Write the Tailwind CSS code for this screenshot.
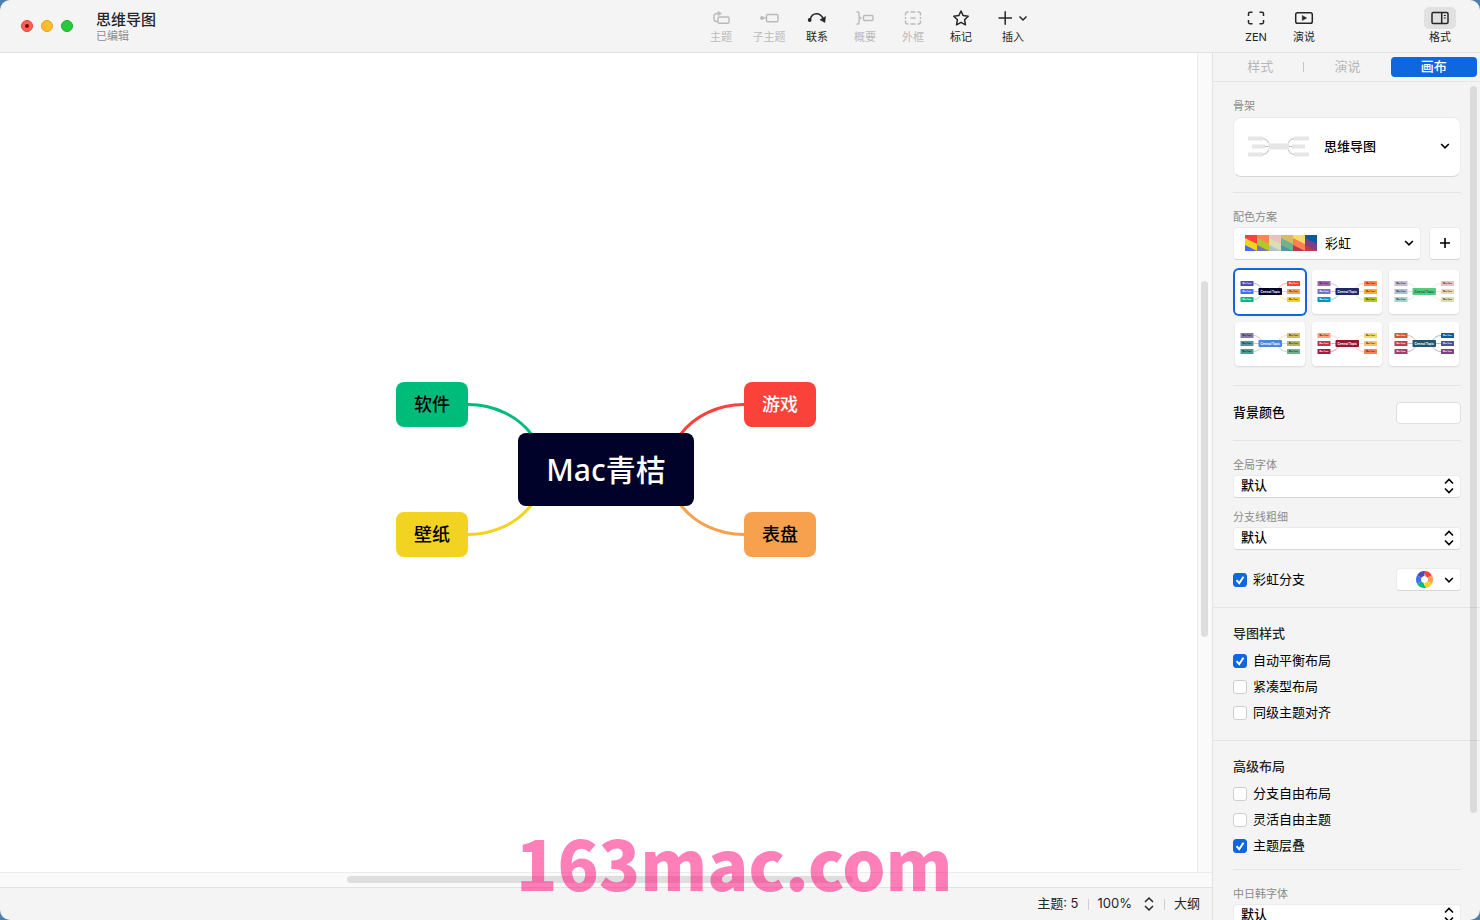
<!DOCTYPE html>
<html lang="zh-CN">
<head>
<meta charset="utf-8">
<title>思维导图</title>
<script src="https://cdn.jsdelivr.net/npm/@tailwindcss/browser@4"></script>
</head>
<body class="bg-[#4d7fae]">
<div class="relative flex h-screen flex-col overflow-hidden rounded-[10px] bg-[#f4f4f4] font-['Inter','Noto_Sans_CJK_SC',sans-serif] text-[13px] text-black">

  <header class="flex h-[53px] shrink-0 border-b border-[#e2e2e2]">
    <div class="flex w-[47.1%] shrink-0 items-center pl-[21px]">
      <div class="flex gap-2">
        <button aria-label="关闭" class="flex size-3 items-center justify-center rounded-full border border-[#e2463f] bg-[#ff5f57]"><span class="size-1 rounded-full bg-[#7a0500]"></span></button>
        <button aria-label="最小化" class="size-3 rounded-full border border-[#e1a325] bg-[#febc2e]"></button>
        <button aria-label="缩放" class="size-3 rounded-full border border-[#1dad2b] bg-[#28c840]"></button>
      </div>
      <div class="ml-[23px] pt-[2px]">
        <h1 class="text-[15px] leading-[18px] font-medium text-[#262626]">思维导图</h1>
        <p class="text-[11px] leading-[14px] text-[#8c8c8c]">已编辑</p>
      </div>
    </div>

    <nav class="flex pt-2 text-[11px] leading-4 text-[#262626]">
      <button disabled class="flex w-12 flex-col items-center gap-[1px] text-[#bababa]">
        <svg class="h-5 w-6" viewBox="0 0 24 20" fill="none" stroke="currentColor" stroke-width="1.400"><rect x="9" y="9" width="11" height="6.300" rx="1.300"/><path d="M9 13.500H7.500A2.500 2.500 0 0 1 5 11V8a2.500 2.500 0 0 1 2.500-2.500h2"/><path d="M9 3.200l3.500 2.300L9 7.800z" fill="currentColor" stroke-width=".5"/></svg>主题</button>
      <button disabled class="flex w-12 flex-col items-center gap-[1px] text-[#bababa]">
        <svg class="h-5 w-6" viewBox="0 0 24 20" fill="none" stroke="currentColor" stroke-width="1.400"><rect x="9.500" y="6.500" width="11.500" height="7.200" rx="1.200"/><path d="M5 10h4.500"/><circle cx="5" cy="10" r="1.900" fill="currentColor" stroke="none"/></svg>子主题</button>
      <button class="flex w-12 flex-col items-center gap-[1px]">
        <svg class="h-5 w-6" viewBox="0 0 24 20" fill="none" stroke="currentColor" stroke-width="1.500"><path d="M5 11.500C7.500 4 15 4 18.500 11"/><circle cx="4.700" cy="12" r="1.900" fill="currentColor" stroke="none"/><path d="M20.500 8.500l-.6 6-5-2.700z" fill="currentColor" stroke-width=".5" stroke-linejoin="round"/></svg>联系</button>
      <button disabled class="flex w-12 flex-col items-center gap-[1px] text-[#bababa]">
        <svg class="h-5 w-6" viewBox="0 0 24 20" fill="none" stroke="currentColor" stroke-width="1.400"><path d="M3.500 4H5q1 0 1 1v3.500Q6 10 8.500 10 6 10 6 11.500V15q0 1-1 1H3.500"/><rect x="10.500" y="7.500" width="9.500" height="5" rx="1"/></svg>概要</button>
      <button disabled class="flex w-12 flex-col items-center gap-[1px] text-[#bababa]">
        <svg class="h-5 w-6" viewBox="0 0 24 20" fill="none" stroke="currentColor" stroke-width="1.400"><path d="M7.500 4H6.500a2 2 0 0 0-2 2v1.500M4.500 9v2M4.500 12.500V14a2 2 0 0 0 2 2h1M9.500 16h5M16.500 16h1a2 2 0 0 0 2-2v-1.500M19.500 11V9M19.500 7.500V6a2 2 0 0 0-2-2h-1M14.500 4h-5M9.500 10h5"/></svg>外框</button>
      <button class="flex w-12 flex-col items-center gap-[1px]">
        <svg class="h-5 w-6" viewBox="0 0 24 20" fill="none" stroke="currentColor" stroke-width="1.500" stroke-linejoin="round"><path d="M12 3l2.200 4.600 5 .7-3.600 3.500.9 5-4.500-2.400-4.500 2.400.9-5L4.800 8.300l5-.7z"/></svg>标记</button>
      <button class="flex w-14 flex-col items-center gap-[1px]">
        <svg class="h-5 w-8" viewBox="0 0 32 20" fill="none" stroke="currentColor" stroke-width="1.500"><path d="M1.500 10h13.500M8.200 3.300v13.400M22.500 8.500l3.500 3.500 3.500-3.500"/></svg>插入</button>
    </nav>

    <nav class="ml-auto flex pt-2 pr-6 text-[11px] leading-4 text-[#262626]">
      <button class="flex w-12 flex-col items-center gap-[1px]">
        <svg class="h-5 w-6" viewBox="0 0 24 20" fill="none" stroke="currentColor" stroke-width="1.500"><path d="M8.500 4.300H6a1.500 1.500 0 0 0-1.500 1.500V8M4.500 12v2.200A1.500 1.500 0 0 0 6 15.700h2.500M15.500 15.700H18a1.500 1.500 0 0 0 1.500-1.500V12M19.500 8V5.800A1.500 1.500 0 0 0 18 4.300h-2.500"/></svg>ZEN</button>
      <button class="flex w-12 flex-col items-center gap-[1px]">
        <svg class="h-5 w-6" viewBox="0 0 24 20" fill="none" stroke="currentColor" stroke-width="1.500"><rect x="3.700" y="4.700" width="16.600" height="10.600" rx="1.800"/><path d="M10.300 7.500v5l4.400-2.500z" fill="currentColor" stroke-width=".5"/></svg>演说</button>
      <button class="ml-24 flex w-8 flex-col items-center gap-[1px]">
        <span class="-mt-px flex h-[22px] w-8 items-center justify-center rounded-[5px] bg-[#e1e1e1]"><svg class="h-5 w-6" viewBox="0 0 24 20" fill="none" stroke="currentColor" stroke-width="1.500"><rect x="4" y="4.500" width="16" height="11" rx="1.300"/><path d="M13.700 4.500v11"/><path d="M15.800 7.500h2M15.800 10h2" stroke-width="1.100"/></svg></span><span class="-mt-px">格式</span></button>
    </nav>
  </header>

  <div class="flex min-h-0 flex-1">
    <div class="flex min-w-0 flex-1 flex-col">
      <div class="flex min-h-0 flex-1">
        <main class="relative min-w-0 flex-1 overflow-hidden bg-white">
          <div class="absolute top-[329px] left-[396px] h-[175px] w-[420px] text-[18px] font-medium">
            <svg class="absolute inset-0 size-full" viewBox="0 0 420 175" fill="none" stroke-width="3">
              <path d="M72 22.500C98 22.500 122 34 136 53" stroke="#00bc7b"/>
              <path d="M72 152.500C98 152.500 122 141 136 122" stroke="#f3d321"/>
              <path d="M348 22.500C322 22.500 298 34 284 53" stroke="#fa423b"/>
              <path d="M348 152.500C322 152.500 298 141 284 122" stroke="#f7a04d"/>
            </svg>
            <div class="absolute top-0 left-0 flex h-[45px] w-[72px] items-center justify-center rounded-lg bg-[#00bc7b]">软件</div>
            <div class="absolute bottom-0 left-0 flex h-[45px] w-[72px] items-center justify-center rounded-lg bg-[#f3d321]">壁纸</div>
            <div class="absolute top-0 right-0 flex h-[45px] w-[72px] items-center justify-center rounded-lg bg-[#fa423b] text-white">游戏</div>
            <div class="absolute right-0 bottom-0 flex h-[45px] w-[72px] items-center justify-center rounded-lg bg-[#f7a04d]">表盘</div>
            <div class="absolute top-[51px] left-[122px] flex h-[73px] w-[176px] items-center justify-center rounded-lg bg-[#000229] font-['Noto_Sans','Noto_Sans_CJK_SC',sans-serif] text-[30px] text-white">Mac青桔</div>
          </div>
        </main>
        <div class="w-[15px] shrink-0 border-l border-[#ececec] bg-[#fafafa]">
          <div class="mt-[228px] ml-[3px] h-[356px] w-[7px] rounded-full bg-[#dedede]"></div>
        </div>
      </div>
      <div class="h-[15px] shrink-0 border-t border-[#ececec] bg-[#fafafa]">
        <div class="mt-[3px] ml-[347px] h-[7px] w-[506px] rounded-full bg-[#dedede]"></div>
      </div>
      <footer class="flex h-[33px] shrink-0 items-center justify-end border-t border-[#e2e2e2] pr-3 text-[#262626]">
        <span>主题: 5</span>
        <span class="mx-[9px] h-[11px] w-px bg-[#cfcfcf]"></span>
        <button class="flex items-center gap-3">100%
          <svg class="h-4 w-[10px]" viewBox="0 0 10 16" fill="none" stroke="currentColor" stroke-width="1.500"><path d="M1 6l4-4 4 4M1 10l4 4 4-4"/></svg></button>
        <span class="mr-[9px] ml-[10px] h-[11px] w-px bg-[#cfcfcf]"></span>
        <button>大纲</button>
      </footer>
    </div>

    <aside class="relative flex w-[268px] shrink-0 flex-col overflow-hidden border-l border-[#e2e2e2]">
      <div class="flex h-[29px] shrink-0 items-center border-b border-[#e5e5e5] pr-[3px] pl-1 text-[#b8b8b8]">
        <button class="h-5 flex-1">样式</button>
        <span class="h-[10px] w-px bg-[#c4c4c4]"></span>
        <button class="h-5 flex-1">演说</button>
        <button class="h-5 flex-1 rounded bg-[#0f67e0] font-medium text-white">画布</button>
      </div>

      <div class="min-h-0 flex-1 overflow-hidden">
        <section class="pt-4 pr-[19px] pb-4 pl-5">
          <label for="skeleton" class="block text-[11px] leading-4 text-[#8c8c8c]">骨架</label>
          <div class="relative mt-[3px]">
            <select id="skeleton" class="block h-[60px] w-full appearance-none rounded-lg border border-[#ebebeb] border-b-[#d6d6d6] bg-white pl-[90px] font-medium"><option>思维导图</option></select>
            <svg class="pointer-events-none absolute top-[18px] left-[14px] h-6 w-[63px]" viewBox="0 0 63 24" fill="none" stroke="#bdbdbd"><path d="M16 3.500q4 0 6 5M16 19.500q4 0 6-5M47 3.500q-4 0-6 5M47 19.500q-4 0-6-5M18 11.500h27"/><path d="M1 1.500h15v4H1zM5 9.500h13v4H5zM1 17.500h15v4H1zM47 1.500h15v4H47zM45 9.500h13v4H45zM47 17.500h15v4H47zM21.500 8.500h20.500v6H21.500z" fill="#e6e6e6" stroke="none"/></svg>
            <svg class="pointer-events-none absolute top-[26px] right-[11px] h-[6px] w-[10px]" viewBox="0 0 10 6" fill="none" stroke="#000" stroke-width="1.600"><path d="M1.200 1L5 4.800 8.800 1"/></svg>
          </div>

          <hr class="mt-[15px] border-[#e5e5e5]">

          <label for="palette" class="mt-4 block text-[11px] leading-4 text-[#8c8c8c]">配色方案</label>
          <div class="mt-[2px] flex gap-2">
            <div class="relative flex-1">
              <select id="palette" class="block h-[33px] w-full appearance-none rounded border border-[#ebebeb] border-b-[#d6d6d6] bg-white pl-[91px]"><option>彩虹</option></select>
              <svg id="swatch" class="pointer-events-none absolute top-2 left-3 h-4 w-[72px]" viewBox="0 0 72 16"></svg>
              <svg class="pointer-events-none absolute top-[13px] right-[7px] h-[6px] w-[10px]" viewBox="0 0 10 6" fill="none" stroke="#000" stroke-width="1.600"><path d="M1.200 1L5 4.800 8.800 1"/></svg>
            </div>
            <button aria-label="添加配色" class="flex h-[33px] w-8 items-center justify-center rounded border border-[#ebebeb] border-b-[#d6d6d6] bg-white pb-px"><svg class="size-[10px]" viewBox="0 0 10 10" stroke="#000" stroke-width="1.600"><path d="M0 5h10M5 0v10"/></svg></button>
          </div>
          <div id="thumbs" class="mt-[10px] grid grid-cols-3 gap-x-[7px] gap-y-2 px-[2px]"></div>

          <hr class="mt-[19px] border-[#e5e5e5]">
          <div class="mt-4 flex h-[22px] items-center justify-between">
            <span class="font-medium">背景颜色</span>
            <button aria-label="背景颜色" class="h-[22px] w-[65px] rounded border border-[#dedede] bg-white"></button>
          </div>
          <hr class="mt-4 border-[#e5e5e5]">

          <label for="font" class="mt-4 block text-[11px] leading-4 text-[#8c8c8c]">全局字体</label>
          <div class="relative mt-[2px]">
            <select id="font" class="block h-[23px] w-full appearance-none rounded border border-[#ebebeb] border-b-[#d6d6d6] bg-white pb-[2px] pl-[7px] font-medium"><option>默认</option></select>
            <svg class="pointer-events-none absolute top-[3px] right-[7px] h-4 w-[10px]" viewBox="0 0 10 16" fill="none" stroke="#000" stroke-width="1.600"><path d="M1 5.500l4-4 4 4M1 10.500l4 4 4-4"/></svg>
          </div>
          <label for="branch" class="mt-[11px] block text-[11px] leading-4 text-[#8c8c8c]">分支线粗细</label>
          <div class="relative mt-[2px]">
            <select id="branch" class="block h-[23px] w-full appearance-none rounded border border-[#ebebeb] border-b-[#d6d6d6] bg-white pb-[2px] pl-[7px] font-medium"><option>默认</option></select>
            <svg class="pointer-events-none absolute top-[3px] right-[7px] h-4 w-[10px]" viewBox="0 0 10 16" fill="none" stroke="#000" stroke-width="1.600"><path d="M1 5.500l4-4 4 4M1 10.500l4 4 4-4"/></svg>
          </div>
          <div class="mt-[18px] flex h-[23px] items-center justify-between">
            <label class="flex items-center gap-[6px]"><span class="relative flex"><input type="checkbox" checked class="peer size-[14px] appearance-none rounded-[3px] border border-[#cfcfcf] bg-white checked:border-[#0f67e0] checked:bg-[#0f67e0]"><svg class="pointer-events-none absolute inset-0 hidden size-[14px] peer-checked:block" viewBox="0 0 14 14" fill="none" stroke="#fff" stroke-width="2"><path d="M3.500 7.200l2.700 3 4.300-6.500"/></svg></span>彩虹分支</label>
            <button aria-label="彩虹分支配色" class="flex h-[23px] w-[65px] items-center justify-end gap-[11px] rounded border border-[#ebebeb] border-b-[#d6d6d6] bg-white pr-[6px]">
              <svg class="size-[17px]" viewBox="-8.500 -8.500 17 17" fill="none" stroke-width="5"><circle r="6" stroke="#fa423b" pathLength="6" stroke-dasharray="1 5" stroke-dashoffset="1.500"/><circle r="6" stroke="#f7a04d" pathLength="6" stroke-dasharray="1 5" stroke-dashoffset=".5"/><circle r="6" stroke="#f3d321" pathLength="6" stroke-dasharray="1 5" stroke-dashoffset="-.5"/><circle r="6" stroke="#00bc7b" pathLength="6" stroke-dasharray="1 5" stroke-dashoffset="-1.500"/><circle r="6" stroke="#486aff" pathLength="6" stroke-dasharray="1 5" stroke-dashoffset="-2.500"/><circle r="6" stroke="#4d49be" pathLength="6" stroke-dasharray="1 5" stroke-dashoffset="-3.500"/></svg>
              <svg class="h-[6px] w-[10px]" viewBox="0 0 10 6" fill="none" stroke="#000" stroke-width="1.600"><path d="M1.200 1L5 4.800 8.800 1"/></svg></button>
          </div>
        </section>

        <section class="border-t border-[#e5e5e5] pt-[15px] pr-[19px] pb-[14px] pl-5">
          <h2 class="mb-[5px] leading-5 font-medium text-[#262626]">导图样式</h2>
          <label class="flex h-[26px] items-center gap-[6px]"><span class="relative flex"><input type="checkbox" checked class="peer size-[14px] appearance-none rounded-[3px] border border-[#cfcfcf] bg-white checked:border-[#0f67e0] checked:bg-[#0f67e0]"><svg class="pointer-events-none absolute inset-0 hidden size-[14px] peer-checked:block" viewBox="0 0 14 14" fill="none" stroke="#fff" stroke-width="2"><path d="M3.500 7.200l2.700 3 4.300-6.500"/></svg></span>自动平衡布局</label>
          <label class="flex h-[26px] items-center gap-[6px]"><input type="checkbox" class="size-[14px] appearance-none rounded-[3px] border border-[#cfcfcf] bg-white">紧凑型布局</label>
          <label class="flex h-[26px] items-center gap-[6px]"><input type="checkbox" class="size-[14px] appearance-none rounded-[3px] border border-[#cfcfcf] bg-white">同级主题对齐</label>
        </section>

        <section class="border-t border-[#e5e5e5] pt-[15px] pr-[19px] pl-5">
          <h2 class="mb-[5px] leading-5 font-medium text-[#262626]">高级布局</h2>
          <label class="flex h-[26px] items-center gap-[6px]"><input type="checkbox" class="size-[14px] appearance-none rounded-[3px] border border-[#cfcfcf] bg-white">分支自由布局</label>
          <label class="flex h-[26px] items-center gap-[6px]"><input type="checkbox" class="size-[14px] appearance-none rounded-[3px] border border-[#cfcfcf] bg-white">灵活自由主题</label>
          <label class="flex h-[26px] items-center gap-[6px]"><span class="relative flex"><input type="checkbox" checked class="peer size-[14px] appearance-none rounded-[3px] border border-[#cfcfcf] bg-white checked:border-[#0f67e0] checked:bg-[#0f67e0]"><svg class="pointer-events-none absolute inset-0 hidden size-[14px] peer-checked:block" viewBox="0 0 14 14" fill="none" stroke="#fff" stroke-width="2"><path d="M3.500 7.200l2.700 3 4.300-6.500"/></svg></span>主题层叠</label>
          <hr class="mt-[10px] border-[#e5e5e5]">
          <label for="cjk" class="mt-4 block text-[11px] leading-4 text-[#8c8c8c]">中日韩字体</label>
          <div class="relative mt-[2px]">
            <select id="cjk" class="block h-[23px] w-full appearance-none rounded border border-[#ebebeb] border-b-[#d6d6d6] bg-white pb-[2px] pl-[7px] font-medium"><option>默认</option></select>
            <svg class="pointer-events-none absolute top-[3px] right-[7px] h-4 w-[10px]" viewBox="0 0 10 16" fill="none" stroke="#000" stroke-width="1.600"><path d="M1 5.500l4-4 4 4M1 10.500l4 4 4-4"/></svg>
          </div>
        </section>
      </div>
      <div class="absolute top-[33px] right-[3px] h-[727px] w-[7px] rounded-full bg-black/10"></div>
    </aside>
  </div>

  <div class="pointer-events-none absolute bottom-2 left-[516px] font-['Noto_Sans_CJK_SC',sans-serif] text-[68px] leading-[100px] font-black text-[#ff0073]/50">163mac.com</div>
</div>

<script>
  // Palette strip: three diagonal bands per column.
  const bands = [
    ['#fa423b', '#f3d321', '#486aff'], ['#ff8551', '#b3c72b', '#7574bc'], ['#e7c2c0', '#d9dfb1', '#adbfd3'],
    ['#d3bc64', '#75b08a', '#4f95a3'], ['#f3dc6c', '#fd8053', '#c0354b'], ['#075c9e', '#7c4084', '#c5394c']
  ];
  document.getElementById('swatch').innerHTML = bands.map((c, i) =>
    `<g transform="translate(${i * 12} 0)"><path fill="${c[0]}" d="M0 0h12v16H0z"/><path fill="${c[1]}" d="M0 3l12 6v7H0z"/><path fill="${c[2]}" d="M0 10l12 6H0z"/></g>`).join('');

  // Theme previews: centre colour, three left topics, three right topics.
  const themes = [
    ['#000229', ['#4d49be', '#486aff', '#00bc7b'], ['#fa423b', '#f7a04d', '#f3d321']],
    ['#1d2765', ['#a166ab', '#7574bc', '#0098b9'], ['#ff8551', '#ffa936', '#b3c72b']],
    ['#52cc83', ['#c8bbcd', '#adbfd3', '#a6d3ca'], ['#e7c2c0', '#f0d5b4', '#d9dfb1']],
    ['#4a86de', ['#7d7ea8', '#4f95a3', '#46a08f'], ['#d3bc64', '#b0b462', '#75b08a']],
    ['#97132f', ['#fda182', '#c4314b', '#a51c3c'], ['#f3dc6c', '#fdbf70', '#fd8053']],
    ['#20566f', ['#d0573c', '#c5394c', '#a53f68'], ['#075c9e', '#514d97', '#7c4084']]
  ];
  const ys = [11, 19, 27];
  const isDark = c => parseInt(c.slice(1, 3), 16) * .3 + parseInt(c.slice(3, 5), 16) * .59 + parseInt(c.slice(5), 16) * .11 < 125;
  const topic = (x, y, c) => `<rect x="${x}" y="${y}" width="13" height="5" rx=".6" fill="${c}"/><text x="${x + 6.5}" y="${y + 3.2}" font-size="1.700" font-weight="700" text-anchor="middle" fill="${isDark(c) ? '#fff' : '#222'}">Main Topic</text>`;
  document.getElementById('thumbs').innerHTML = themes.map(([mid, left, right], n) => {
    const lines = left.map((c, i) => `<path d="M18.500 ${ys[i] + 2.5}Q25 ${ys[i] + 2.5} 28 21.500" stroke="${c}"/>`).join('') +
      right.map((c, i) => `<path d="M52 ${ys[i] + 2.5}Q45 ${ys[i] + 2.5} 42 21.500" stroke="${c}"/>`).join('');
    return `<button aria-label="配色 ${n + 1}" class="h-11 rounded-[4px] bg-white ${n ? 'shadow-[0_1px_2px_rgba(0,0,0,0.12)]' : 'ring-2 ring-[#0f67e0]'}"><svg class="h-11 w-full" viewBox="0 0 70 44"><g fill="none" stroke-width=".6" opacity=".7">${lines}</g>` +
      left.map((c, i) => topic(5.5, ys[i], c)).join('') + right.map((c, i) => topic(52, ys[i], c)).join('') +
      `<rect x="23.500" y="18" width="23.500" height="7" rx=".8" fill="${mid}"/><text x="35.300" y="22.600" font-size="3" font-weight="700" text-anchor="middle" fill="${n === 2 ? '#1e5c38' : '#fff'}">Central Topic</text></svg></button>`;
  }).join('');
</script>
</body>
</html>
